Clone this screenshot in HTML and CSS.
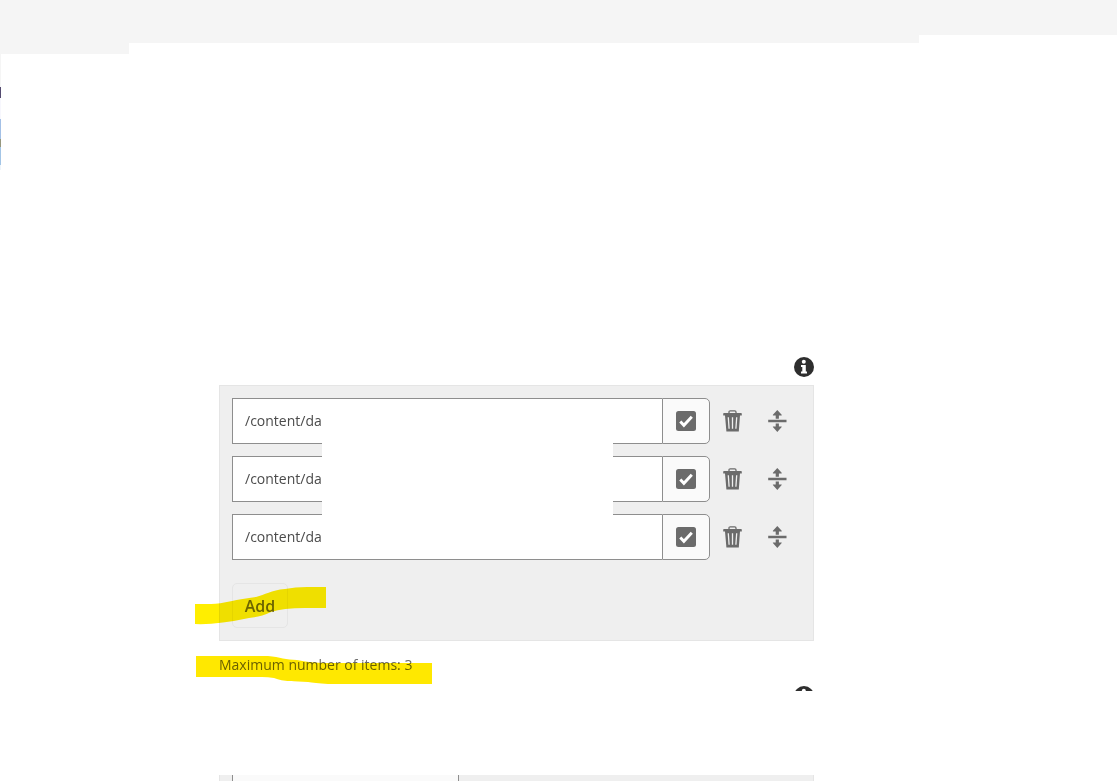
FILE: index.html
```html
<!DOCTYPE html>
<html lang="en">
<head>
  <meta charset="UTF-8">
  <title>Content paths</title>
  <link rel="stylesheet" href="styles.css">
</head>
<body>
  <svg class="symbols" aria-hidden="true">
    <symbol id="icon-info" viewBox="0 0 20 20">
      <circle cx="10" cy="10" r="10" fill="#2e2e2e"/>
      <circle cx="9.8" cy="4.8" r="2" fill="#fff"/>
      <path d="M7 8h4.8v6.4H13v2.1H7v-2.1h1.3v-4.3H7z" fill="#fff"/>
    </symbol>
    <symbol id="icon-check" viewBox="0 0 20 20">
      <rect width="20" height="20" rx="2.5" fill="#6b6b6b"/>
      <path d="M4.3 10.4l3.6 3.9 7.9-8.6" fill="none" stroke="#fff" stroke-width="2.9"/>
    </symbol>
    <symbol id="icon-trash" viewBox="0 0 20 22">
      <path d="M6 3.2V2Q6 .8 7.2.8h4.6Q13 .8 13 2v1.2" fill="none" stroke="#6b6b6b" stroke-width="1.3"/>
      <path d="M1 3h17q.8 0 .8.8v1.7H17L15.8 21.5H3.4L2 5.5H.2V3.8Q.2 3 1 3z" fill="#6b6b6b"/>
      <path d="M5.3 7.2l.8 11.6M9.5 7.2v11.6M13.7 7.2l-.8 11.6" stroke="#efefef" stroke-width="1.3"/>
    </symbol>
    <symbol id="icon-move" viewBox="0 0 20 22">
      <path d="M9.3 0l4.4 4.8v.7h-2.8v3.2H7.7V5.5H4.9v-.7zM.2 9.8h18.3v2.4H.2zM7.7 13.4h3.2v3h2.8v.7L9.3 22l-4.4-4.9v-.7h2.8z" fill="#6b6b6b"/>
    </symbol>
  </svg>

  <header class="topbar">
    <div class="topbar-left"></div>
    <div class="topbar-middle"></div>
    <div class="topbar-right"></div>
  </header>

  <div class="page">
    <div class="edge"></div>
    <main class="form">
      <div class="info-row">
        <button class="info" type="button" aria-label="Info"><svg width="20" height="20"><use href="#icon-info"/></svg></button>
      </div>

      <section class="panel">
        <div class="items">
          <div class="item">
            <input class="path" type="text" value="/content/dam" aria-label="Path 1">
            <button class="picker" type="button" aria-label="Select path"><svg width="20" height="20"><use href="#icon-check"/></svg></button>
            <button class="action" type="button" aria-label="Delete"><svg width="20" height="22"><use href="#icon-trash"/></svg></button>
            <button class="action" type="button" aria-label="Reorder"><svg width="20" height="22"><use href="#icon-move"/></svg></button>
          </div>
          <div class="item">
            <input class="path" type="text" value="/content/dam" aria-label="Path 2">
            <button class="picker" type="button" aria-label="Select path"><svg width="20" height="20"><use href="#icon-check"/></svg></button>
            <button class="action" type="button" aria-label="Delete"><svg width="20" height="22"><use href="#icon-trash"/></svg></button>
            <button class="action" type="button" aria-label="Reorder"><svg width="20" height="22"><use href="#icon-move"/></svg></button>
          </div>
          <div class="item">
            <input class="path" type="text" value="/content/dam" aria-label="Path 3">
            <button class="picker" type="button" aria-label="Select path"><svg width="20" height="20"><use href="#icon-check"/></svg></button>
            <button class="action" type="button" aria-label="Delete"><svg width="20" height="22"><use href="#icon-trash"/></svg></button>
            <button class="action" type="button" aria-label="Reorder"><svg width="20" height="22"><use href="#icon-move"/></svg></button>
          </div>
          <div class="cover"></div>
        </div>
        <div class="marked">
          <button class="add" type="button">Add</button>
          <svg class="marker marker-add" width="132" height="40" viewBox="0 0 132 40" aria-hidden="true">
            <path d="M0 17h16C28 17 42 12 61 10C70 8 76 3 90 2Q100 0 112 0h19v21h-21Q88 21 76 25C68 29 62 30 54 31Q22 38 0 37z" fill="#ffee00"/>
          </svg>
        </div>
      </section>

      <div class="marked">
        <p class="hint">Maximum number of items: 3</p>
        <svg class="marker marker-hint" width="236" height="28" viewBox="0 0 236 28" aria-hidden="true">
          <path d="M0 0h72C84 1 90 4 101 4Q114 7 130 7h106v21H132Q118 27 112 26C98 25 88 26 78 22Q72 21 66 21H0z" fill="#ffe800"/>
        </svg>
      </div>

      <div class="info-row info-row-cut">
        <button class="info" type="button" aria-label="Info"><svg width="20" height="20"><use href="#icon-info"/></svg></button>
      </div>

      <section class="panel panel-cut">
        <button class="dropdown" type="button" aria-label="Options"></button>
      </section>
    </main>
  </div>
</body>
</html>
```
FILE: styles.css
```css
* { box-sizing: border-box; }
body { margin: 0; background: #fff; color: #4b4b4b; font-family: "Open Sans", "Noto Sans", sans-serif; font-size: 14px; line-height: 20px; }
button { margin: 0; padding: 0; border: 0; background: none; font: inherit; color: inherit; }
svg { display: block; }
.symbols { position: absolute; width: 0; height: 0; }

.topbar { display: flex; align-items: flex-start; height: 54px; }
.topbar div { background: #f5f5f5; }
.topbar-left { width: 129px; height: 54px; }
.topbar-middle { flex: 1; height: 43px; }
.topbar-right { width: 198px; height: 35px; }

.page { display: flex; }
.edge { width: 1px; height: 116px; background: linear-gradient(#f5f5f5 33px, #544b70 33px 44px, #f7f7fd 44px 65px, #a3c0e6 65px 85px, #96977d 85px 93px, #a3c5e6 93px 111px, #eef5fb 111px); }
.form { flex: 1; padding: 303px 303px 0 218px; }

.info-row { display: flex; justify-content: flex-end; margin-bottom: 8px; }
.info-row-cut { height: 5px; margin-bottom: 84px; overflow: hidden; }
.info { height: 20px; }

.panel { padding: 12px; border: 1px solid #e5e5e5; background: #efefef; }
.items { position: relative; display: flex; flex-direction: column; gap: 12px; margin-bottom: 23px; }
.item { display: flex; height: 46px; padding-right: 1px; }
.path { flex: 1; min-width: 0; padding: 0 12px; border: 1px solid #8e8e8e; border-right: 0; background: #fff; color: #4b4b4b; font: inherit; }
.picker { display: flex; align-items: center; justify-content: center; width: 48px; border: 1px solid #8e8e8e; border-radius: 0 5px 5px 0; background: #fafafa; }
.action { display: flex; align-items: center; justify-content: center; width: 45px; }

/* blank area over the paths */
.cover { position: absolute; top: 12px; bottom: 12px; left: 90px; width: 291px; background: #fff; }

.marked { position: relative; }
.add { display: block; width: 56px; height: 45px; border: 1px solid #e5e5e5; border-radius: 5px; font-size: 16px; font-weight: 600; color: #6b6b6b; }
.marker { position: absolute; mix-blend-mode: multiply; pointer-events: none; }
.marker-add { top: 4px; left: -37px; }
.marker-hint { top: 1px; left: -23px; }
.hint { margin: 14px 0 0; padding-bottom: 11px; color: #6b6b6b; }

.panel-cut { display: flex; height: 6px; padding: 0 12px; border-width: 0 1px; }
.dropdown { width: 227px; border: solid #8e8e8e; border-width: 0 1px; background: #fafafa; }
```
